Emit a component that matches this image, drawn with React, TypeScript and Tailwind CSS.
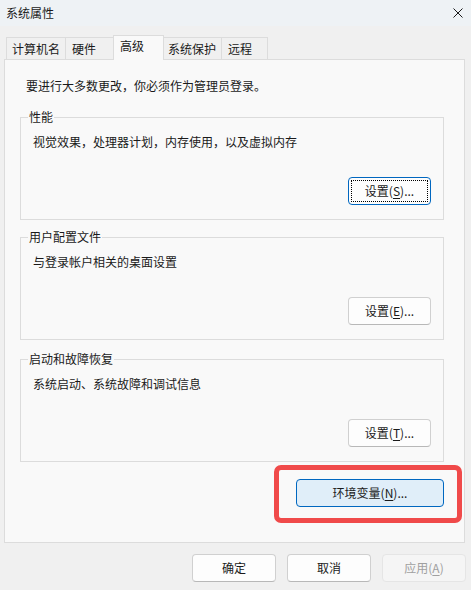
import React from 'react';

const font = { fontFamily: '"Noto Sans CJK SC", "Noto Sans", sans-serif' };

const Key = ({ k }: { k: string }) => <span className="underline underline-offset-2">{k}</span>;

const Btn = ({ label, k, focused }: { label: string; k: string; focused?: boolean }) => {
  if (focused) {
    return (
      <div className="w-[83px] h-[28px] rounded-[4px] border border-[#0067c0] bg-[#fdfdfd] p-[2px]">
        <div className="w-full h-full border border-dotted border-black flex items-center justify-center text-[12px] leading-[16px] text-[#1a1a1a]">
          {label}(<Key k={k} />)...
        </div>
      </div>
    );
  }
  return (
    <div className="w-[83px] h-[28px] rounded-[4px] border border-[#d0d0d0] border-b-[#b8b8b8] bg-[#fdfdfd] flex items-center justify-center text-[12px] leading-[16px] text-[#1a1a1a]">
      {label}(<Key k={k} />)...
    </div>
  );
};

const Group = ({ title, text, children, mt }: { title: string; text: string; children: React.ReactNode; mt: string }) => (
  <div className={'relative ml-[15px] w-[424px] h-[103px] border border-[#dcdcdc] flex flex-col ' + mt}>
    <span className="absolute left-[7px] top-[-9px] px-[1px] bg-[#f9f9f9] text-[12px] leading-[16px] text-[#1a1a1a]">{title}</span>
    <div className="pl-[12px] pt-[16px] text-[12px] leading-[16px] text-[#1a1a1a]">{text}</div>
    <div className="flex-1" />
    <div className="flex justify-end pr-[12px] pb-[14px]">{children}</div>
  </div>
);

const tabs = [
  { name: '计算机名', w: 'w-[60px]', pl: 'pl-[5px]' },
  { name: '硬件', w: 'w-[49px]', pl: 'pl-[6px]' },
  { name: '高级', w: 'w-[51px]', pl: 'pl-[6px]', active: true },
  { name: '系统保护', w: 'w-[59px]', pl: 'pl-[4px]' },
  { name: '远程', w: 'w-[47px]', pl: 'pl-[6px]' },
];

export default function App() {
  return (
    <div className="w-[471px] h-[590px] bg-[#f0f0f0] flex flex-col text-[#1a1a1a]" style={font}>
      <div className="h-[26px] bg-[#eef2f5] flex items-center justify-between pl-[6px] pr-[8px]">
        <span className="text-[12px] leading-[16px]">系统属性</span>
        <svg width="10" height="10" viewBox="0 0 10 10">
          <path d="M0.5 0.5 L9.5 9.5 M9.5 0.5 L0.5 9.5" stroke="#1a1a1a" strokeWidth="1" />
        </svg>
      </div>

      <div className="h-[33px] flex items-end pl-[6px]">
        {tabs.map((t, i) =>
          t.active ? (
            <div
              key={t.name}
              className={'relative z-10 -mb-px -ml-px h-[25px] border-t border-l border-r border-[#dcdcdc] bg-[#f9f9f9] flex items-start pt-[2px] text-[12px] leading-[16px] ' + t.w + ' ' + t.pl}
            >
              {t.name}
            </div>
          ) : (
            <div
              key={t.name}
              className={'h-[22px] border-t border-l border-r border-[#dcdcdc] bg-[#f0f0f0] flex items-center text-[12px] leading-[16px] ' + (i > 0 ? '-ml-px ' : '') + t.w + ' ' + t.pl}
            >
              {t.name}
            </div>
          )
        )}
      </div>

      <div className="ml-[4px] w-[461px] h-[484px] border border-[#dcdcdc] bg-[#f9f9f9] flex flex-col">
        <div className="mt-[18px] ml-[21px] text-[12px] leading-[16px]">要进行大多数更改，你必须作为管理员登录。</div>

        <Group title="性能" text="视觉效果，处理器计划，内存使用，以及虚拟内存" mt="mt-[23px]">
          <Btn label="设置" k="S" focused />
        </Group>

        <Group title="用户配置文件" text="与登录帐户相关的桌面设置" mt="mt-[17px]">
          <Btn label="设置" k="E" />
        </Group>

        <Group title="启动和故障恢复" text="系统启动、系统故障和调试信息" mt="mt-[19px]">
          <Btn label="设置" k="T" />
        </Group>

        <div className="mt-[17px] flex justify-end pr-[20px]">
          <div className="relative">
            <div className="w-[148px] h-[28px] rounded-[4px] border border-[#0067c0] bg-[#e0eef9] flex items-center justify-center text-[12px] leading-[16px]">
              环境变量(<Key k="N" />)...
            </div>
            <div className="absolute left-[-22px] right-[-18px] top-[-14px] bottom-[-16px] rounded-[7px] border-[5px] border-[#f04a4a]" />
          </div>
        </div>
      </div>

      <div className="mt-[11px] flex justify-end gap-[11px] pr-[5px]">
        <div className="w-[84px] h-[28px] rounded-[4px] border border-[#d0d0d0] border-b-[#b8b8b8] bg-[#fdfdfd] flex items-center justify-center text-[12px] leading-[16px]">确定</div>
        <div className="w-[84px] h-[28px] rounded-[4px] border border-[#d0d0d0] border-b-[#b8b8b8] bg-[#fdfdfd] flex items-center justify-center text-[12px] leading-[16px]">取消</div>
        <div className="w-[84px] h-[28px] rounded-[4px] border border-[#e5e5e5] bg-[#f5f5f5] flex items-center justify-center text-[12px] leading-[16px] text-[#a0a0a0]">
          应用(<Key k="A" />)
        </div>
      </div>
    </div>
  );
}
